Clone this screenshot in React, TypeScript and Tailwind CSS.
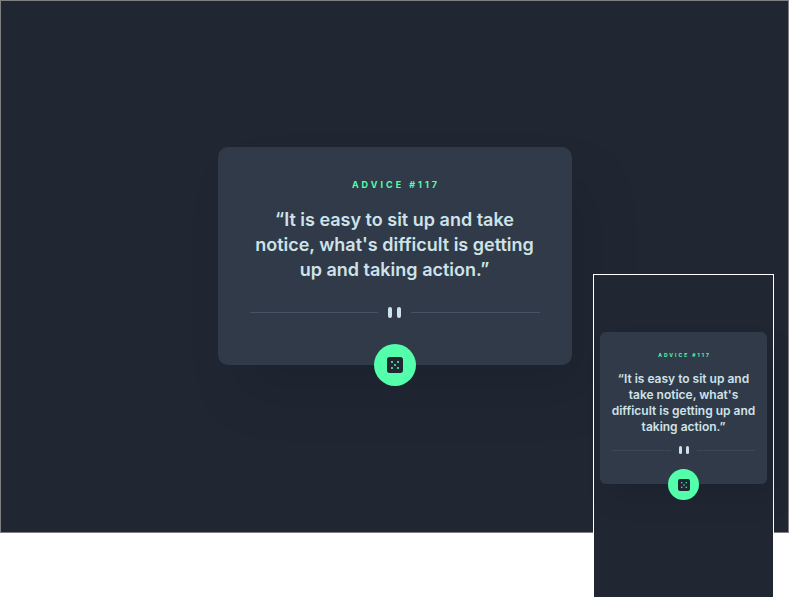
type DividerProps = { small?: boolean };

function Divider({ small = false }: DividerProps) {
  const line = small ? "h-px flex-1 bg-[#3b4858]" : "h-px flex-1 bg-[#435467]";
  const bar = small ? "h-2 w-[3px] rounded-full bg-[#cee3e9]" : "h-[11px] w-1 rounded-full bg-[#cee3e9]";
  return (
    <div className="flex w-full items-center" aria-hidden="true">
      <span className={line} />
      <span className={small ? "flex gap-1 px-2" : "flex gap-[5px] px-[10px]"}>
        <span className={bar} />
        <span className={bar} />
      </span>
      <span className={line} />
    </div>
  );
}

function DiceIcon({ className }: { className: string }) {
  return (
    <svg viewBox="0 0 24 24" className={className} aria-hidden="true">
      <path
        fill="#202733"
        d="M20 0H4a4.005 4.005 0 0 0-4 4v16a4.005 4.005 0 0 0 4 4h16a4.005 4.005 0 0 0 4-4V4a4.005 4.005 0 0 0-4-4ZM7.5 18a1.5 1.5 0 1 1 0-3 1.5 1.5 0 0 1 0 3Zm0-9a1.5 1.5 0 1 1 0-3 1.5 1.5 0 0 1 0 3Zm4.500 4.500a1.500 1.500 0 1 1 0-3 1.500 1.500 0 0 1 0 3Zm4.500 4.500a1.500 1.500 0 1 1 0-3 1.500 1.500 0 0 1 0 3Zm0-9a1.500 1.500 0 1 1 0-3 1.500 1.500 0 0 1 0 3Z"
      />
    </svg>
  );
}

function DesktopCard() {
  return (
    <article className="flex w-[354px] flex-col items-center rounded-[10px] bg-[#313a48] px-8 pt-8 shadow-[20px_32px_52px_rgba(0,0,0,0.1)]">
      <h1 className="pl-[3px] text-[9px] leading-3 font-bold tracking-[3px] text-[#53ffaa]">ADVICE #117</h1>
      <p className="mt-4 text-center text-[18px] leading-[25px] font-semibold text-[#cee3e9]">
        “It is easy to sit up and take
        <br />
        notice, what's difficult is getting
        <br />
        up and taking action.”
      </p>
      <div className="mt-[25px] w-full">
        <Divider />
      </div>
      <button
        type="button"
        aria-label="New advice"
        className="mt-[26px] -mb-[21px] flex size-[42px] items-center justify-center rounded-full bg-[#53ffaa]"
      >
        <DiceIcon className="size-4" />
      </button>
    </article>
  );
}

function PhoneCard() {
  return (
    <article className="flex w-full flex-col items-center rounded-md bg-[#313a48] px-3 pt-5 shadow-[10px_16px_26px_rgba(0,0,0,0.1)]">
      <h2 className="pl-[2px] text-[5px] leading-[6px] font-bold tracking-[2px] text-[#53ffaa]">ADVICE #117</h2>
      <p className="mt-[13px] text-center text-[12px] leading-4 font-semibold whitespace-nowrap text-[#cee3e9]">
        “It is easy to sit up and
        <br />
        take notice, what's
        <br />
        difficult is getting up and
        <br />
        taking action.”
      </p>
      <div className="mt-[11px] w-full">
        <Divider small />
      </div>
      <button
        type="button"
        aria-label="New advice"
        className="mt-[15px] -mb-4 flex size-[31px] items-center justify-center rounded-full bg-[#53ffaa]"
      >
        <DiceIcon className="size-3" />
      </button>
    </article>
  );
}

export default function App() {
  return (
    <div className="relative flex min-h-screen flex-col bg-white font-['Inter',sans-serif]">
      <main className="mb-16 flex flex-1 items-center justify-center border border-[#808080] bg-[#202733] pb-[21px]">
        <DesktopCard />
      </main>
      <section className="absolute top-[274px] right-[15px] bottom-0 w-[181px] border border-b-0 border-white bg-[#202733] px-[6px] pt-[57px]">
        <PhoneCard />
      </section>
    </div>
  );
}
